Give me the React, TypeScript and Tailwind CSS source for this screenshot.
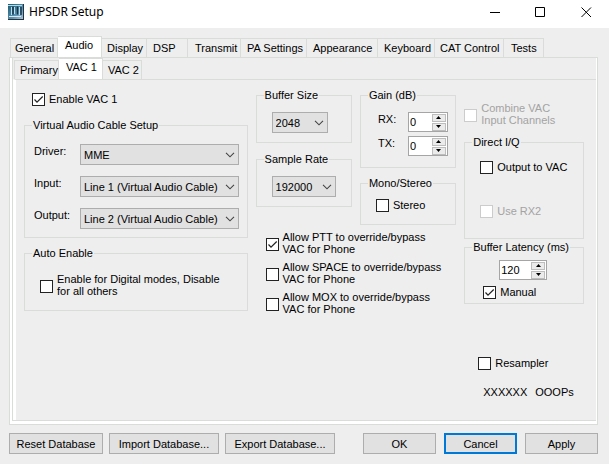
import { useId, useState } from "react";
import type { ReactNode } from "react";

const edge = "border-[#d9dcd9]";

function Tab({ label, active, className, onClick }: { label: string; active: boolean; className: string; onClick: () => void }) {
  return (
    <button
      type="button"
      role="tab"
      aria-selected={active}
      onClick={onClick}
      className={`${className} shrink-0 whitespace-nowrap border-t border-r ${edge} text-left ${
        active ? "h-[21px] bg-white pb-1" : "h-[19px] bg-[#eeeeee]"
      }`}
    >
      {label}
    </button>
  );
}

function Group({ title, className = "", children }: { title: string; className?: string; children: ReactNode }) {
  return (
    <fieldset className={`min-w-0 border ${edge} ${className}`}>
      <legend className="ml-[7px] px-px leading-[14px]">{title}</legend>
      {children}
    </fieldset>
  );
}

function Check({ children, checked = false, disabled = false, className = "" }: { children: ReactNode; checked?: boolean; disabled?: boolean; className?: string }) {
  const [on, setOn] = useState(checked);
  return (
    <label className={`flex items-center gap-1 whitespace-nowrap ${disabled ? "text-[#a3a3a3]" : ""} ${className}`}>
      <span className="relative mt-0.5 size-[13px] shrink-0">
        <input
          type="checkbox"
          checked={on}
          disabled={disabled}
          onChange={() => setOn(!on)}
          className="block size-[13px] appearance-none border border-[#222222] bg-white disabled:border-[#cccccc]"
        />
        {on && (
          <svg viewBox="0 0 13 13" className="pointer-events-none absolute inset-0 size-[13px]" fill="none" stroke="#222" strokeWidth="1.2">
            <path d="M2.5 6.5 5 9.2 10.7 3.5" />
          </svg>
        )}
      </span>
      <span className="leading-3">{children}</span>
    </label>
  );
}

function Combo({ id, label, value, className = "" }: { id?: string; label?: string; value: string; className?: string }) {
  return (
    <span className={`relative block h-[21px] ${className}`}>
      <select id={id} aria-label={label} className="block h-full w-full appearance-none border border-[#adadad] bg-[#e1e1e1] pl-[3px] text-[11px]">
        <option>{value}</option>
      </select>
      <svg viewBox="0 0 10 6" className="pointer-events-none absolute top-2 right-1 h-[6px] w-[10px]" fill="none" stroke="#444" strokeWidth="1.1">
        <path d="M1 .8 5 4.8 9 .8" />
      </svg>
    </span>
  );
}

function Spinner({ id, label, value, className }: { id?: string; label?: string; value: number; className: string }) {
  const [n, setN] = useState(value);
  const step = "flex h-2 w-[14px] items-center justify-center border border-[#bdbdbd] bg-[#ebebeb]";
  return (
    <span className={`flex h-5 items-center border border-[#a5a5a5] bg-white pr-px ${className}`}>
      <input
        id={id}
        aria-label={label}
        inputMode="numeric"
        value={n}
        onChange={(e) => setN(Number(e.target.value) || 0)}
        className="h-full w-0 min-w-0 flex-1 pl-px outline-none"
      />
      <span className="flex flex-col gap-px">
        <button type="button" aria-label="Increase" className={step} onClick={() => setN(n + 1)}>
          <svg viewBox="0 0 5 3" className="h-[3px] w-[5px]"><path d="M0 3 2.5 0 5 3z" /></svg>
        </button>
        <button type="button" aria-label="Decrease" className={step} onClick={() => setN(n - 1)}>
          <svg viewBox="0 0 5 3" className="h-[3px] w-[5px]"><path d="M0 0 2.5 3 5 0z" /></svg>
        </button>
      </span>
    </span>
  );
}

function DeviceRow({ label, value }: { label: string; value: string }) {
  const id = useId();
  return (
    <div className="flex h-[21px]">
      <label htmlFor={id} className="w-[47px] shrink-0 pl-px leading-[14px]">{label}</label>
      <Combo id={id} value={value} className="flex-1" />
    </div>
  );
}

function GainRow({ label }: { label: string }) {
  const id = useId();
  return (
    <div className="flex">
      <label htmlFor={id} className="w-[30px] leading-[14px]">{label}</label>
      <Spinner id={id} value={0} className="w-10" />
    </div>
  );
}

function PushButton({ children, className }: { children: ReactNode; className: string }) {
  return (
    <button type="button" className={`h-[21px] whitespace-nowrap bg-[#e1e1e1] ${className}`}>
      {children}
    </button>
  );
}

const pages = [
  { label: "General", className: "w-[48px] border-l pl-1" },
  { label: "Audio", className: "w-[44px] pl-[7px]" },
  { label: "Display", className: "w-[45px] pl-[5px]" },
  { label: "DSP", className: "w-[41px] pl-[6px]" },
  { label: "Transmit", className: "w-[53px] pl-[7px]" },
  { label: "PA Settings", className: "w-[66px] pl-[6px]" },
  { label: "Appearance", className: "w-[71px] pl-[6px]" },
  { label: "Keyboard", className: "w-[57px] pl-[6px]" },
  { label: "CAT Control", className: "w-[69px] pl-[5px]" },
  { label: "Tests", className: "w-[40px] pl-[7px]" },
];

const audioPages = [
  { label: "Primary", className: "w-[45px] border-l pl-[5px]" },
  { label: "VAC 1", className: "w-[44px] pl-[7px]" },
  { label: "VAC 2", className: "w-[39px] pl-[5px]" },
];

export default function App() {
  const [page, setPage] = useState("Audio");
  const [audioPage, setAudioPage] = useState("VAC 1");
  return (
    <div className="flex min-h-screen flex-col bg-[#eeeeee] font-['Liberation_Sans',sans-serif] text-[11px] leading-[14px] text-black">
      <header className="flex h-7 items-center bg-white pb-1 pl-2">
        <svg viewBox="0 0 16 16" className="size-4">
          <defs>
            <linearGradient id="panel" x1="0" y1="0" x2="1" y2="1">
              <stop offset="0" stopColor="#1d5a72" />
              <stop offset=".6" stopColor="#5b93b5" />
              <stop offset="1" stopColor="#b9cfe0" />
            </linearGradient>
          </defs>
          <rect width="16" height="16" fill="url(#panel)" />
          <path d="M0 1.5h14" stroke="#a9dbe8" />
          <path d="M3.5 3v8M6.5 3v7M11.5 3v8" stroke="#b8e0ea" />
          <path d="M5 2.5v8M9.500 2.500v8M13 3v8" stroke="#173446" strokeWidth="1.4" />
          <path d="M1 12.500h12" stroke="#dde6ea" />
          <path d="M15.500 0v16M0 15.500h16" stroke="#26323c" />
        </svg>
        <h1 className="ml-[5px] font-['Noto_Sans',sans-serif] text-[12px]">HPSDR Setup</h1>
        <div className="ml-auto flex pr-[17px]">
          <button type="button" aria-label="Minimize" className="mr-[34px]">
            <svg viewBox="0 0 11 11" className="size-[11px]"><path d="M0 5.5h10" stroke="#000" /></svg>
          </button>
          <button type="button" aria-label="Maximize" className="mr-[35px]">
            <svg viewBox="0 0 11 11" className="size-[11px]"><path d="M.5.5h9v9h-9z" fill="none" stroke="#000" /></svg>
          </button>
          <button type="button" aria-label="Close">
            <svg viewBox="0 0 11 11" className="size-[11px]"><path d="m.5.5 9.5 9.5M10 .5.5 10" stroke="#000" /></svg>
          </button>
        </div>
      </header>

      <main className="flex flex-1 flex-col px-[9px] pt-2 pr-[11px]">
        <div role="tablist" className="flex items-end pl-px">
          {pages.map((p) => (
            <Tab key={p.label} {...p} active={page === p.label} onClick={() => setPage(p.label)} />
          ))}
        </div>
        <section className={`border ${edge} bg-white pr-px pb-[3px] pl-[2px]`}>
          <div className={`bg-[#eeeeee] border-b border-l ${edge}`}>
            <div role="tablist" className="flex items-end pl-px">
              {audioPages.map((p) => (
                <Tab key={p.label} {...p} active={audioPage === p.label} onClick={() => setAudioPage(p.label)} />
              ))}
            </div>
            <div className="flex min-h-[341px] gap-2 border-t border-l-[3px] border-t-[#d9dcd9] border-l-white pr-3 pl-2">
              <div className="flex-[224] pt-[11px]">
                <Check checked className="ml-2">Enable VAC 1</Check>
                <Group title="Virtual Audio Cable Setup" className="mt-3">
                  <div className="flex flex-col gap-[11px] px-2 pt-3 pb-2">
                    <DeviceRow label="Driver:" value="MME" />
                    <DeviceRow label="Input:" value="Line 1 (Virtual Audio Cable)" />
                    <DeviceRow label="Output:" value="Line 2 (Virtual Audio Cable)" />
                  </div>
                </Group>
                <Group title="Auto Enable" className="mt-2">
                  <Check className="mx-[15px] my-[13px]">
                    Enable for Digital modes, Disable
                    <br />
                    for all others
                  </Check>
                </Group>
              </div>

              <div className="flex-[201] pt-2">
                <div className="flex gap-2">
                  <div className="flex flex-1 flex-col gap-[9px]">
                    <Group title="Buffer Size">
                      <Combo label="Buffer Size" value="2048" className="mt-[10px] mb-[9px] ml-[15px] w-14" />
                    </Group>
                    <Group title="Sample Rate">
                      <Combo label="Sample Rate" value="192000" className="mt-[10px] mb-[9px] ml-[15px] w-16" />
                    </Group>
                  </div>
                  <div className="flex flex-1 flex-col gap-2">
                    <Group title="Gain (dB)">
                      <div className="flex flex-col gap-1 pt-[10px] pb-[11px] pl-[17px]">
                        <GainRow label="RX:" />
                        <GainRow label="TX:" />
                      </div>
                    </Group>
                    <Group title="Mono/Stereo">
                      <Check className="mt-[7px] mb-3 ml-[15px]">Stereo</Check>
                    </Group>
                  </div>
                </div>
                <div className="mt-[6px] ml-[10px] flex flex-col gap-[6px]">
                  <Check checked>Allow PTT to override/bypass<br />VAC for Phone</Check>
                  <Check>Allow SPACE to override/bypass<br />VAC for Phone</Check>
                  <Check>Allow MOX to override/bypass<br />VAC for Phone</Check>
                </div>
              </div>

              <div className="flex-[120] pt-[22px]">
                <Check disabled>Combine VAC<br />Input Channels</Check>
                <Group title="Direct I/Q" className="mt-[9px]">
                  <Check className="mt-[10px] ml-[15px]">Output to VAC</Check>
                  <Check disabled className="mt-[29px] mb-5 ml-[15px]">Use RX2</Check>
                </Group>
                <Group title="Buffer Latency (ms)" className="mt-px">
                  <Spinner label="Buffer Latency (ms)" value={120} className="mt-[6px] ml-[34px] w-12" />
                  <Check checked className="mt-1 mb-1 ml-[18px]">Manual</Check>
                </Group>
                <Check className="mt-[51px] ml-[14px]">Resampler</Check>
                <p className="mt-[15px] ml-[19px] flex gap-2">
                  <span>XXXXXX</span>
                  <span>OOOPs</span>
                </p>
              </div>
            </div>
          </div>
        </section>

        <footer className="mt-2 flex">
          <PushButton className="mr-[6px] w-[94px] border border-[#adadad]">Reset Database</PushButton>
          <PushButton className="mr-[6px] w-[110px] border border-[#adadad]">Import Database...</PushButton>
          <PushButton className="w-[110px] border border-[#adadad]">Export Database...</PushButton>
          <div className="ml-auto flex gap-2">
            <PushButton className="w-[73px] border border-[#adadad]">OK</PushButton>
            <PushButton className="w-[73px] border-2 border-[#0078d7]">Cancel</PushButton>
            <PushButton className="w-[73px] border border-[#adadad]">Apply</PushButton>
          </div>
        </footer>
      </main>
    </div>
  );
}
